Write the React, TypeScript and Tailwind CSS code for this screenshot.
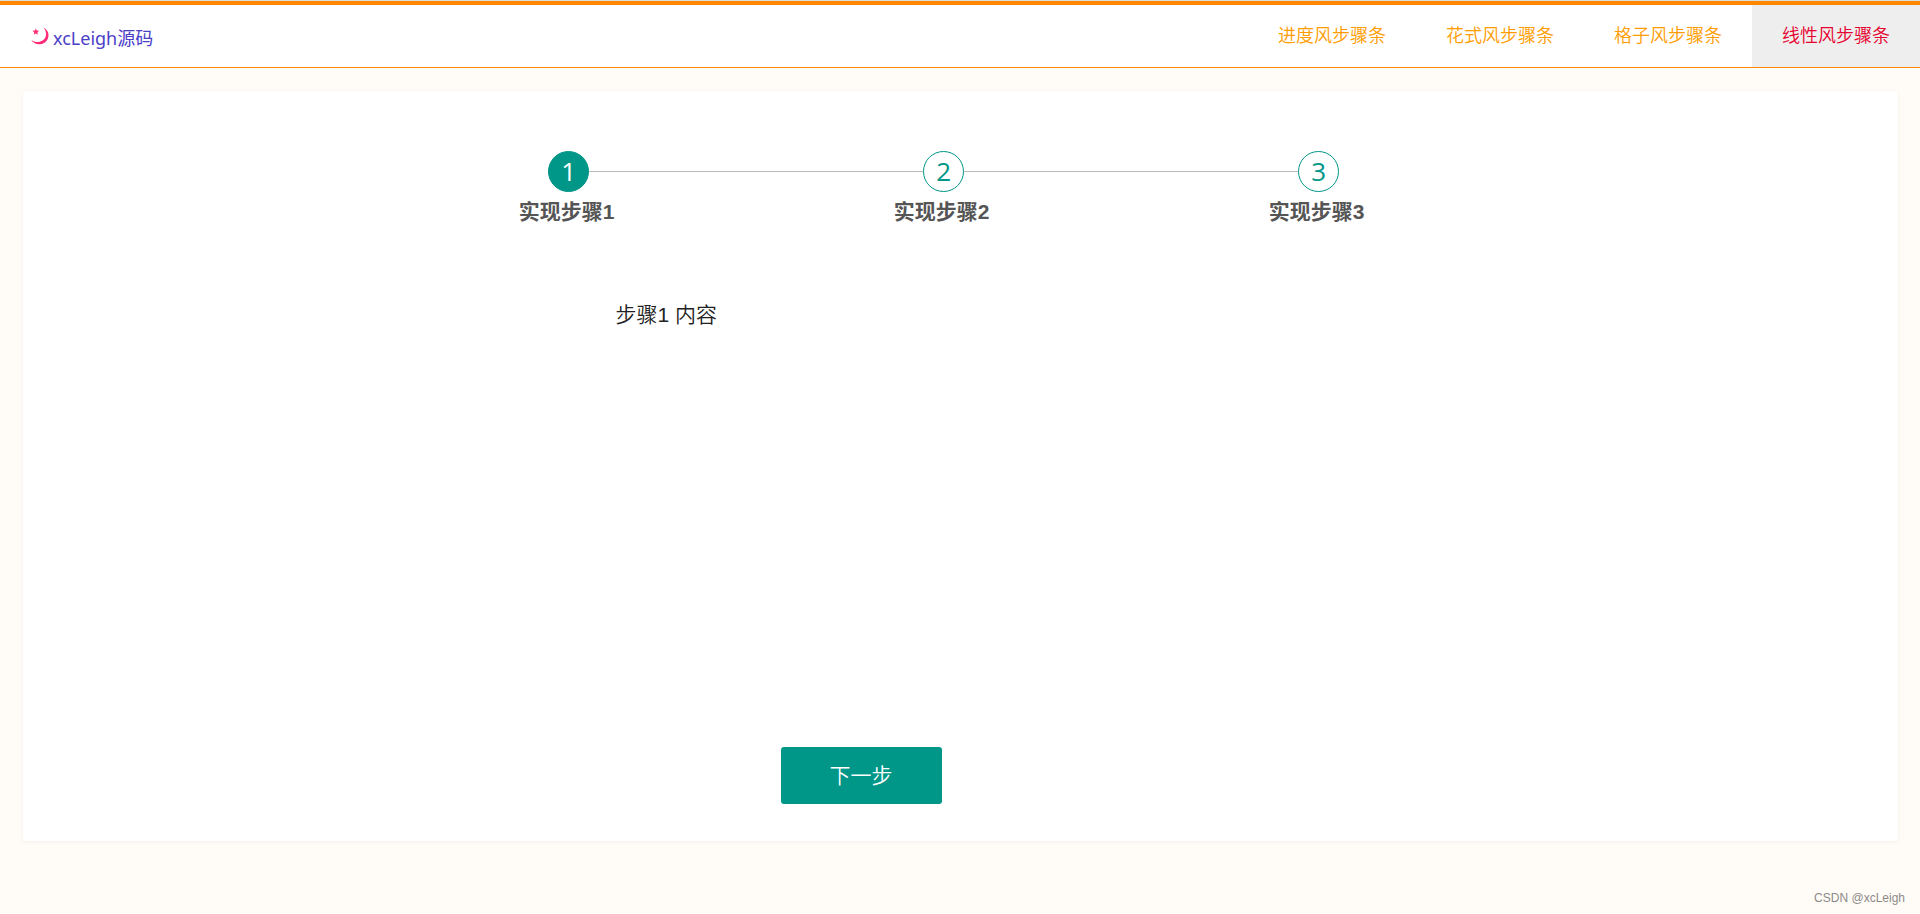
import { useState } from "react";

const navItems = ["进度风步骤条", "花式风步骤条", "格子风步骤条", "线性风步骤条"];
const steps = [1, 2, 3];

function MoonLogo() {
  return (
    <svg viewBox="0 0 18 18" className="size-[18px]" fill="#ff2d78" aria-hidden="true">
      <path d="M12.6 0.6C16 2.6 18 5.6 17.4 9.4C16.7 14.2 12.6 17.4 8 17.2C4.600 17 1.800 15.400 0.300 12.900C2.500 14.600 5.500 15.300 8.500 14.700C12.400 13.900 15 11 15 7.200C15 4.700 14.100 2.500 12.600 0.600Z" />
      <path d="M4.800 1.400L5.700 3.600L8.100 3.800L6.300 5.400L6.900 7.800L4.800 6.500L2.700 7.800L3.300 5.400L1.500 3.800L3.900 3.600Z" />
    </svg>
  );
}

export default function App() {
  const [current, setCurrent] = useState(1);
  return (
    <div className="flex min-h-[calc(100vh-1px)] flex-col bg-[#fffcf7] font-['Liberation_Sans','Noto_Sans_CJK_SC',sans-serif]">
      <header className="flex h-[68px] shrink-0 flex-col border-b border-[#ff8800] bg-white">
        <div className="h-px bg-[#dcdcdc]" />
        <div className="h-1 bg-[#ff8800]" />
        <div className="flex flex-1 justify-between">
          <a href="#" className="flex items-center gap-1 pl-[31px] text-[18px] leading-6 text-[#4a40c8]">
            <MoonLogo />
            <span className="pt-1 font-['Noto_Sans','Noto_Sans_CJK_SC',sans-serif]">xcLeigh源码</span>
          </a>
          <nav className="flex">
            {navItems.map((item, i) => (
              <a
                key={item}
                href="#"
                className={
                  i === 3
                    ? "flex items-center bg-[#eeeeee] px-[30px] text-[18px] font-[350] text-[#e6002d]"
                    : "flex items-center px-[30px] text-[18px] font-[350] text-[#ff9c00]"
                }
              >
                {item}
              </a>
            ))}
          </nav>
        </div>
      </header>

      <main className="mt-[23px] mr-[22px] ml-[23px] flex h-[750px] flex-col rounded bg-white pt-[60px] shadow-[0_1px_4px_rgba(0,0,0,0.05)]">
        <ol className="ml-[19.1%] grid w-[60%] grid-cols-3">
          {steps.map((n) => (
            <li key={n} className="flex flex-col">
              <div className="flex items-center">
                <span className={n === 1 ? "h-px flex-1" : "h-px flex-1 bg-[#bbbbbb]"} />
                <span
                  className={
                    n <= current
                      ? "flex size-[41px] items-center justify-center rounded-full border border-[#009688] bg-[#009688] pb-[2px] font-['Open_Sans',sans-serif] text-[26px] leading-none text-white"
                      : "flex size-[41px] items-center justify-center rounded-full border border-[#009688] bg-white pb-[2px] font-['Open_Sans',sans-serif] text-[26px] leading-none text-[#009688]"
                  }
                >
                  {n}
                </span>
                <span className={n === 3 ? "h-px flex-1" : "h-px flex-1 bg-[#bbbbbb]"} />
              </div>
              <span className="mt-1 pr-1 text-center text-[21px] leading-8 font-bold text-[#555555]">实现步骤{n}</span>
            </li>
          ))}
        </ol>

        <section className="mt-[71px] ml-[31.6%] flex-1 text-[21px] leading-8 font-[350] text-[#222222]">
          步骤{current} 内容
        </section>

        <button
          type="button"
          onClick={() => setCurrent((c) => Math.min(c + 1, 3))}
          className="mb-[37px] ml-[40.4%] h-[57px] w-[161px] rounded-[3px] bg-[#009688] text-[21px] font-[350] text-white"
        >
          下一步
        </button>
      </main>

      <footer className="mt-auto pr-[15px] pb-[5px] text-right text-[12px] leading-5 text-[#8c8a88]">
        CSDN @xcLeigh
      </footer>
    </div>
  );
}
